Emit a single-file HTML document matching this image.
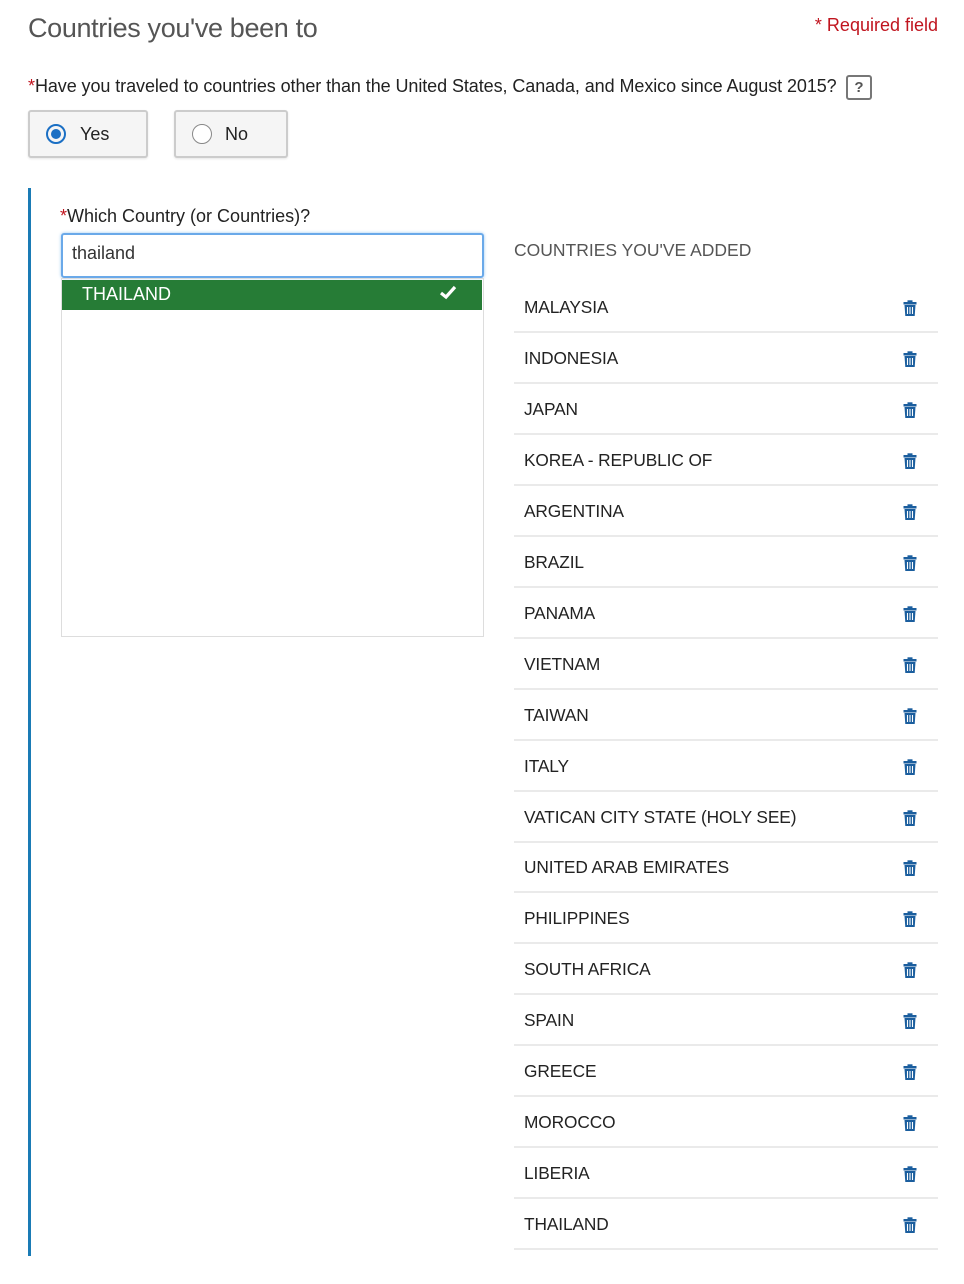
<!DOCTYPE html>
<html><head><meta charset="utf-8"><style>
body{margin:0;width:964px;height:1284px;background:#fff;font-family:"Liberation Sans",Arial,sans-serif;position:relative;overflow:hidden;color:#222}
.a{position:absolute}
h1{position:absolute;left:28px;top:13px;margin:0;font-weight:normal;font-size:27px;color:#555;font-family:"Liberation Sans",sans-serif;letter-spacing:-0.35px}
.req{color:#c0141e}
.btn{position:absolute;top:110px;height:44px;border:2px solid #ccc;border-radius:3px;background:#f5f5f5;box-shadow:0 1px 2px rgba(0,0,0,.1)}
.rad{position:absolute;left:16px;top:12px;width:20px;height:20px;border-radius:50%;box-sizing:border-box}
.row{position:absolute;left:514px;width:424px;height:49px;border-bottom:2px solid #eaeaea}
.row span{position:absolute;left:10px;top:15px;font-size:17.3px;color:#222;letter-spacing:-0.1px}
.row svg{position:absolute;left:389px;top:18px}
</style></head><body>
<h1>Countries you've been to</h1>
<div class="a req" style="right:26px;top:15px;font-size:18px">* Required field</div>
<div class="a" style="left:28px;top:76px;font-size:18px;letter-spacing:-0.08px"><span class="req">*</span>Have you traveled to countries other than the United States, Canada, and Mexico since August 2015?</div>
<div class="a" style="left:846px;top:75px;width:22px;height:21px;border:2px solid #777;border-radius:3px;text-align:center;font-weight:bold;font-size:15px;line-height:21px;color:#555">?</div>
<div class="btn" style="left:28px;width:116px"><div class="rad" style="border:2px solid #1a6fc4;padding:3px;"><div style="width:10px;height:10px;border-radius:50%;background:#1a6fc4"></div></div><span class="a" style="left:50px;top:12px;font-size:18px">Yes</span></div>
<div class="btn" style="left:174px;width:110px"><div class="rad" style="border:1px solid #888;background:#fff"></div><span class="a" style="left:49px;top:12px;font-size:18px">No</span></div>
<div class="a" style="left:28px;top:188px;width:3px;height:1068px;background:#1a7bb5"></div>
<div class="a" style="left:60px;top:206px;font-size:18px"><span class="req">*</span>Which Country (or Countries)?</div>
<div class="a" style="left:61px;top:233px;width:419px;height:41px;border:2px solid #6aa9e9;border-radius:3px;box-shadow:0 0 3px #9cc8f0"></div>
<div class="a" style="left:72px;top:243px;font-size:18px;color:#333">thailand</div>
<div class="a" style="left:61px;top:278px;width:421px;height:357px;border:1px solid #ddd"></div>
<div class="a" style="left:62px;top:280px;width:420px;height:30px;background:#267c36"></div>
<div class="a" style="left:82px;top:284px;font-size:18px;color:#fff">THAILAND</div>
<svg class="a" style="left:439px;top:285px" width="18" height="15" viewBox="0 0 18 15"><path d="M2 8l5 4 9-10" stroke="#fff" stroke-width="3.2" fill="none"/></svg>
<div class="a" style="left:514px;top:240px;font-size:17.5px;color:#555">COUNTRIES YOU'VE ADDED</div>
<div id="list"></div>
<script>
var c=["MALAYSIA","INDONESIA","JAPAN","KOREA - REPUBLIC OF","ARGENTINA","BRAZIL","PANAMA","VIETNAM","TAIWAN","ITALY","VATICAN CITY STATE (HOLY SEE)","UNITED ARAB EMIRATES","PHILIPPINES","SOUTH AFRICA","SPAIN","GREECE","MOROCCO","LIBERIA","THAILAND"];
var h="";
var ic='<svg width="14" height="16" viewBox="0 0 14 16"><rect x="0.5" y="2" width="13" height="2.5" fill="#1b5e9e"/><rect x="4.5" y="0.3" width="5" height="2.5" fill="#1b5e9e"/><path d="M1.5 5h11l-0.8 11H2.3z" fill="#1b5e9e"/><path d="M4.5 7v7M7 7v7M9.5 7v7" stroke="#fff" stroke-width="1.1"/></svg>';
for(var i=0;i<c.length;i++){var t=282+Math.round(i*50.95);h+='<div class="row" style="top:'+t+'px"><span>'+c[i]+'</span>'+ic+'</div>';}
document.getElementById("list").innerHTML=h;
</script>
</body></html>
